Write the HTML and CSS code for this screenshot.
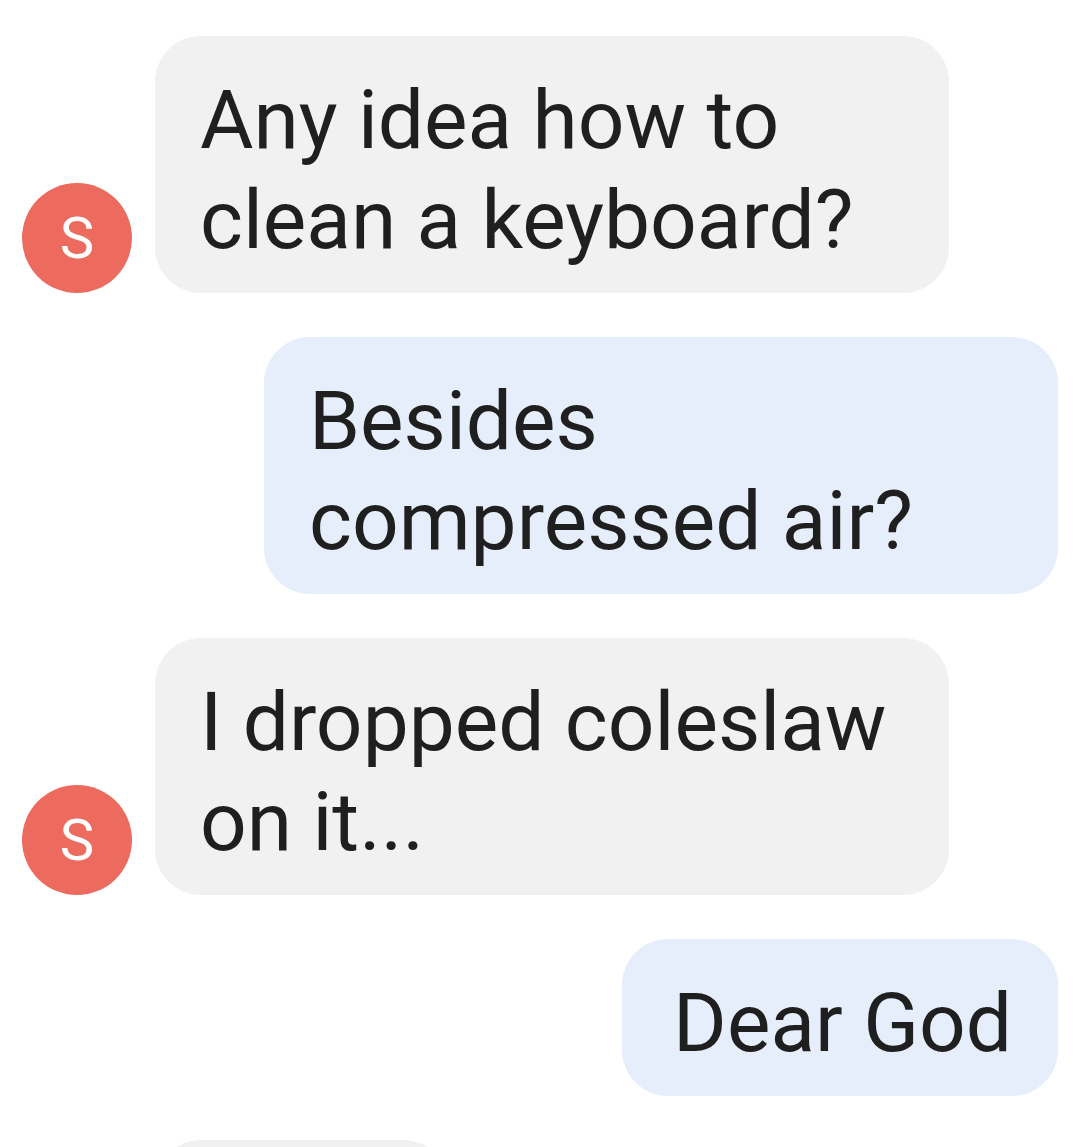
FILE: index.html
```html
<!DOCTYPE html>
<html>
<head>
<meta charset="utf-8">
<link rel="stylesheet" href="styles.css">
</head>
<body>
<div class="chat">
  <div class="row in">
    <div class="avatar">S</div>
    <div class="bubble gray">Any idea how to clean a keyboard?</div>
  </div>
  <div class="row out">
    <div class="bubble blue">Besides compressed air?</div>
  </div>
  <div class="row in">
    <div class="avatar">S</div>
    <div class="bubble gray">I dropped coleslaw on it...</div>
  </div>
  <div class="row out">
    <div class="bubble blue short">Dear God</div>
  </div>
  <div class="row in">
    <div class="avatar-space"></div>
    <div class="bubble gray partial"></div>
  </div>
</div>
</body>
</html>
```
FILE: styles.css
```css
html, body {
  margin: 0;
  padding: 0;
  background: #ffffff;
  height: 1147px;
  overflow: hidden;
}
.chat {
  display: flex;
  flex-direction: column;
  gap: 44px;
  padding: 36px 22px 0 22px;
  font-family: Roboto, "Noto Sans", sans-serif;
}
.row {
  display: flex;
  align-items: flex-end;
  gap: 23px;
}
.row.out {
  justify-content: flex-end;
}
.avatar, .avatar-space {
  width: 110px;
  height: 110px;
  flex: 0 0 110px;
}
.avatar {
  border-radius: 50%;
  background: #ec6a5e;
  color: #ffffff;
  font-size: 58px;
  font-weight: 400;
  display: flex;
  align-items: center;
  justify-content: center;
}
.bubble {
  max-width: 794px;
  box-sizing: border-box;
  padding: 34px 46px 23px 45px;
  border-radius: 46px;
  font-size: 82px;
  line-height: 100px;
  color: #1f1f1f;
}
.gray {
  background: #f1f1f1;
}
.blue {
  background: #e6eefb;
}
.blue.short {
  padding-left: 51px;
}
.partial {
  width: 294px;
  height: 156px;
}
```
